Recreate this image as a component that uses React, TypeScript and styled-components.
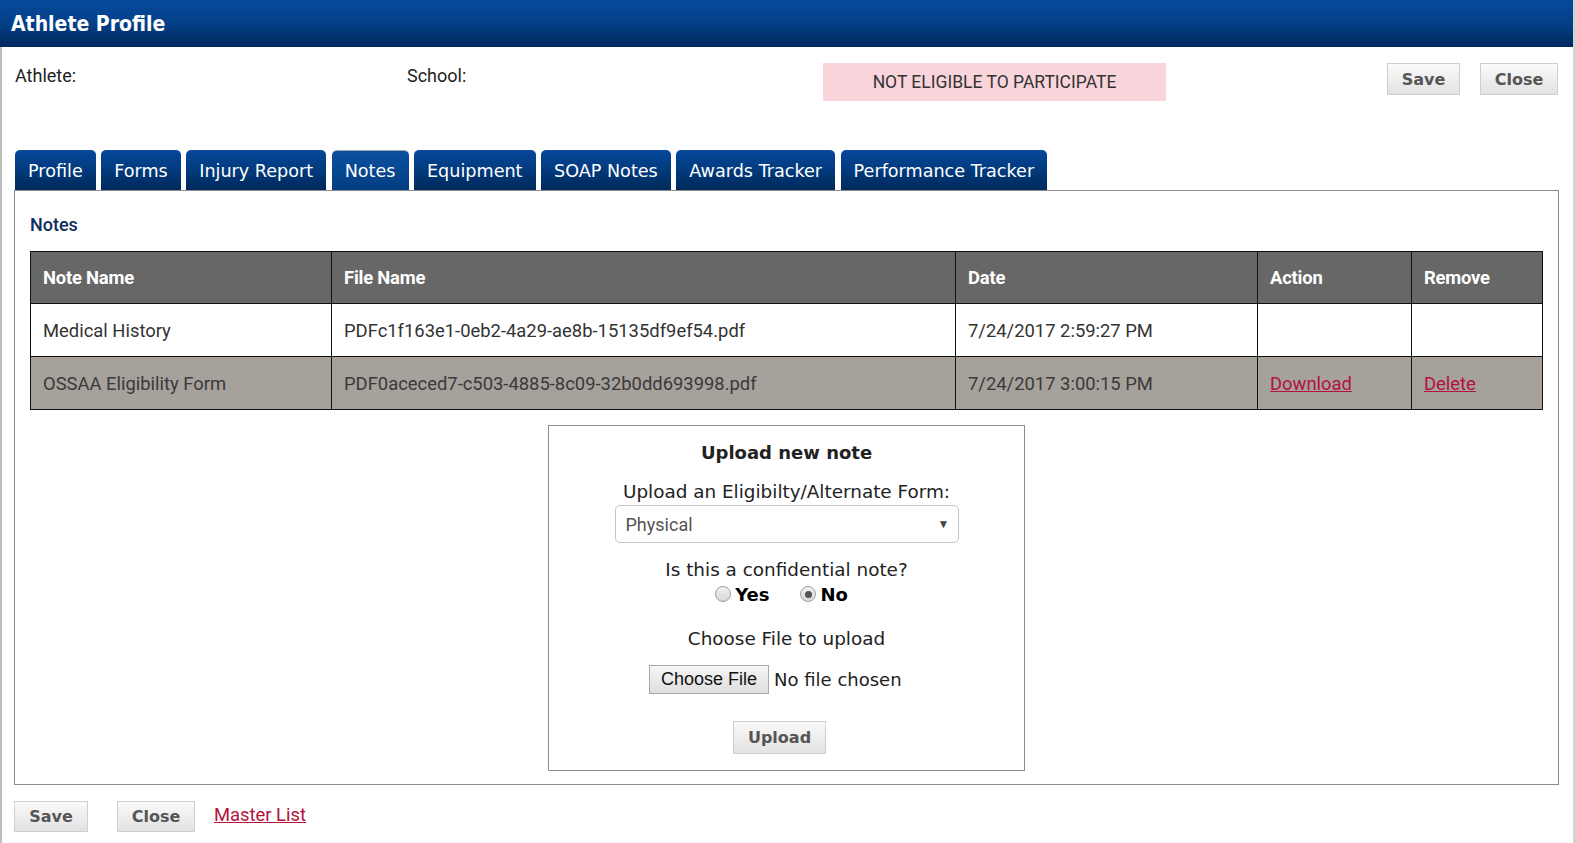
import styled, { createGlobalStyle } from "styled-components";

const GlobalStyle = createGlobalStyle`
  html, body {
    margin: 0;
    padding: 0;
    background: #fff;
  }
  body {
    font-family: Roboto, "Liberation Sans", sans-serif;
    color: #222;
  }
`;

const Window = styled.div`
  width: 1576px;
  min-height: 843px;
  box-sizing: border-box;
  border-left: 2px solid #bdbdbd;
  border-right: 3px solid #d4d4d4;
  background: #fff;
`;

const TitleBar = styled.div`
  height: 47px;
  margin-left: -2px;
  padding-left: 11px;
  display: flex;
  align-items: center;
  background: linear-gradient(#06499c 0%, #04418b 45%, #002a5e 100%);
  color: #fff;
  font-family: "DejaVu Sans Condensed", "DejaVu Sans", sans-serif;
  font-stretch: condensed;
  font-weight: bold;
  font-size: 21px;
`;

const InfoRow = styled.div`
  display: grid;
  grid-template-columns: 392px 416px 343px 1fr auto;
  align-items: start;
  padding: 16px 15px 0 13px;
`;

const FieldLabel = styled.div`
  font-size: 18px;
  line-height: 22px;
  margin-top: 2px;
  color: #222;
`;

const StatusBox = styled.div`
  height: 38px;
  line-height: 38px;
  text-align: center;
  background: #f9d5db;
  color: #333;
  font-family: Roboto, sans-serif;
  font-size: 17.5px;
`;

const ButtonGroup = styled.div<{ $gap: number }>`
  display: flex;
  align-items: center;
  gap: ${(p) => p.$gap}px;
`;

const GrayButton = styled.button<{ $w: number; $h?: number }>`
  width: ${(p) => p.$w}px;
  height: ${(p) => p.$h ?? 32}px;
  padding: 0;
  border: 1px solid #cfcfcf;
  border-radius: 0;
  background: linear-gradient(#fafafa, #e2e2e2);
  color: #555;
  font-family: "DejaVu Sans", Verdana, sans-serif;
  font-weight: bold;
  font-size: 16px;
  cursor: pointer;
`;

const UploadButton = styled(GrayButton)`
  margin: 27px 14px 0 0;
`;

const TabStrip = styled.div`
  display: flex;
  gap: 5.5px;
  margin: 49px 0 0 13px;
`;

const Tab = styled.div<{ $active?: boolean }>`
  height: 40px;
  box-sizing: border-box;
  padding: 0 13px;
  display: flex;
  align-items: center;
  border-radius: 5px 5px 0 0;
  border-top: 1px solid ${(p) => (p.$active ? "#9aa4b0" : "#0a4d9c")};
  background: ${(p) =>
    p.$active
      ? "linear-gradient(#0c50a0, #05458e 60%, #033c80)"
      : "linear-gradient(#05479a, #023a7c 50%, #00295a)"};
  color: #fff;
  font-family: "DejaVu Sans", Verdana, sans-serif;
  font-size: 17.6px;
  white-space: nowrap;
`;

const Panel = styled.div`
  margin: 0 14px 0 12px;
  border: 1px solid #8c8c8c;
  padding: 20px 15px 13px 15px;
`;

const SectionTitle = styled.div`
  font-size: 18px;
  line-height: 28px;
  font-weight: 500;
  color: #0a2d5c;
  margin-bottom: 12px;
`;

const NotesTable = styled.table`
  width: 100%;
  border-collapse: collapse;
  border: 1px solid #111;
  font-size: 18.4px;
  table-layout: fixed;

  th,
  td {
    border: 1px solid #111;
    text-align: left;
    padding: 0 12px;
  }

  th {
    height: 51px;
    background: #676767;
    color: #fff;
    font-weight: 700;
    letter-spacing: -0.2px;
  }
`;

const Col = styled.col<{ $w?: number }>`
  width: ${(p) => (p.$w ? `${p.$w}px` : "auto")};
`;

const Row = styled.tr<{ $shaded?: boolean }>`
  td {
    height: 52px;
    background: ${(p) => (p.$shaded ? "#a6a19a" : "#fff")};
    color: ${(p) => (p.$shaded ? "#3a3a3a" : "#333")};
  }
`;

const RedLink = styled.a`
  color: #b3123d;
  text-decoration: underline;
  font-size: 18.4px;
  cursor: pointer;
`;

const UploadBox = styled.div`
  width: 477px;
  box-sizing: border-box;
  margin: 15px auto 0;
  border: 1px solid #8c8c8c;
  padding: 15px 0 16px;
  display: flex;
  flex-direction: column;
  align-items: center;
  font-family: "DejaVu Sans", Verdana, sans-serif;
  font-size: 18.4px;
  color: #222;
`;

const BoxLine = styled.div<{ $top: number; $bold?: boolean }>`
  line-height: 24px;
  margin-top: ${(p) => p.$top}px;
  font-weight: ${(p) => (p.$bold ? "bold" : "normal")};
  font-size: ${(p) => (p.$bold ? "18px" : "inherit")};
`;

const SelectBox = styled.div`
  width: 344px;
  height: 38px;
  box-sizing: border-box;
  margin-top: 1px;
  padding: 0 8px 0 10px;
  display: flex;
  align-items: center;
  justify-content: space-between;
  border: 1px solid #c4c4c4;
  border-radius: 5px;
  font-family: Roboto, sans-serif;
  font-size: 18px;
  color: #555;

  span:last-child {
    font-size: 12px;
    color: #444;
  }
`;

const RadioRow = styled.div`
  display: flex;
  align-items: center;
  margin: 0 10px 0 0;
  height: 24px;
  font-weight: bold;
  font-size: 18px;
  color: #000;
`;

const RadioOption = styled.label`
  display: flex;
  align-items: center;
  gap: 4px;
  & + & {
    margin-left: 31px;
  }
`;

const RadioDot = styled.span<{ $checked?: boolean }>`
  width: 16px;
  height: 16px;
  box-sizing: border-box;
  border-radius: 50%;
  border: 1px solid #a0a0a0;
  background: linear-gradient(#f2f2f2, #d6d6d6);
  display: flex;
  align-items: center;
  justify-content: center;

  &::after {
    content: "";
    width: 7px;
    height: 7px;
    border-radius: 50%;
    background: ${(p) => (p.$checked ? "#555" : "transparent")};
  }
`;

const FileRow = styled.div`
  width: 275px;
  height: 29px;
  margin-top: 14px;
  display: flex;
  align-items: center;
  gap: 5px;
  font-size: 18px;
`;

const FileButton = styled.span`
  height: 29px;
  box-sizing: border-box;
  padding: 0 11px;
  display: flex;
  align-items: center;
  border: 1px solid #a9a9a9;
  background: linear-gradient(#f6f6f6, #dedede);
  font-family: "Liberation Sans", Arial, sans-serif;
  font-size: 18px;
  color: #111;
`;

const FooterRow = styled.div`
  display: flex;
  align-items: center;
  margin: 16px 0 0 12px;

  a {
    margin-left: 19px;
    margin-top: -4px;
  }
`;

const tabs = [
  "Profile",
  "Forms",
  "Injury Report",
  "Notes",
  "Equipment",
  "SOAP Notes",
  "Awards Tracker",
  "Performance Tracker",
];

const notes = [
  {
    name: "Medical History",
    file: "PDFc1f163e1-0eb2-4a29-ae8b-15135df9ef54.pdf",
    date: "7/24/2017 2:59:27 PM",
    links: false,
  },
  {
    name: "OSSAA Eligibility Form",
    file: "PDF0aceced7-c503-4885-8c09-32b0dd693998.pdf",
    date: "7/24/2017 3:00:15 PM",
    links: true,
  },
];

const App = () => {
  return (
    <>
      <GlobalStyle />
      <Window>
        <TitleBar>Athlete Profile</TitleBar>

        <InfoRow>
          <FieldLabel>Athlete:</FieldLabel>
          <FieldLabel>School:</FieldLabel>
          <StatusBox>NOT ELIGIBLE TO PARTICIPATE</StatusBox>
          <div />
          <ButtonGroup $gap={20}>
            <GrayButton $w={73}>Save</GrayButton>
            <GrayButton $w={78}>Close</GrayButton>
          </ButtonGroup>
        </InfoRow>

        <TabStrip>
          {tabs.map((t) => (
            <Tab key={t} $active={t === "Notes"}>
              {t}
            </Tab>
          ))}
        </TabStrip>

        <Panel>
          <SectionTitle>Notes</SectionTitle>
          <NotesTable>
            <colgroup>
              <Col $w={301} />
              <Col $w={624} />
              <Col $w={302} />
              <Col $w={154} />
              <Col />
            </colgroup>
            <thead>
              <tr>
                <th>Note Name</th>
                <th>File Name</th>
                <th>Date</th>
                <th>Action</th>
                <th>Remove</th>
              </tr>
            </thead>
            <tbody>
              {notes.map((n, i) => (
                <Row key={n.file} $shaded={i % 2 === 1}>
                  <td>{n.name}</td>
                  <td>{n.file}</td>
                  <td>{n.date}</td>
                  <td>{n.links && <RedLink>Download</RedLink>}</td>
                  <td>{n.links && <RedLink>Delete</RedLink>}</td>
                </Row>
              ))}
            </tbody>
          </NotesTable>

          <UploadBox>
            <BoxLine $top={0} $bold>
              Upload new note
            </BoxLine>
            <BoxLine $top={15}>Upload an Eligibilty/Alternate Form:</BoxLine>
            <SelectBox>
              <span>Physical</span>
              <span>▼</span>
            </SelectBox>
            <BoxLine $top={15}>Is this a confidential note?</BoxLine>
            <RadioRow>
              <RadioOption>
                <RadioDot />
                Yes
              </RadioOption>
              <RadioOption>
                <RadioDot $checked />
                No
              </RadioOption>
            </RadioRow>
            <BoxLine $top={21}>Choose File to upload</BoxLine>
            <FileRow>
              <FileButton>Choose File</FileButton>
              <span>No file chosen</span>
            </FileRow>
            <UploadButton $w={93} $h={33}>
              Upload
            </UploadButton>
          </UploadBox>
        </Panel>

        <FooterRow>
          <ButtonGroup $gap={29}>
            <GrayButton $w={74} $h={31}>
              Save
            </GrayButton>
            <GrayButton $w={78} $h={31}>
              Close
            </GrayButton>
          </ButtonGroup>
          <RedLink>Master List</RedLink>
        </FooterRow>
      </Window>
    </>
  );
};

export default App;
